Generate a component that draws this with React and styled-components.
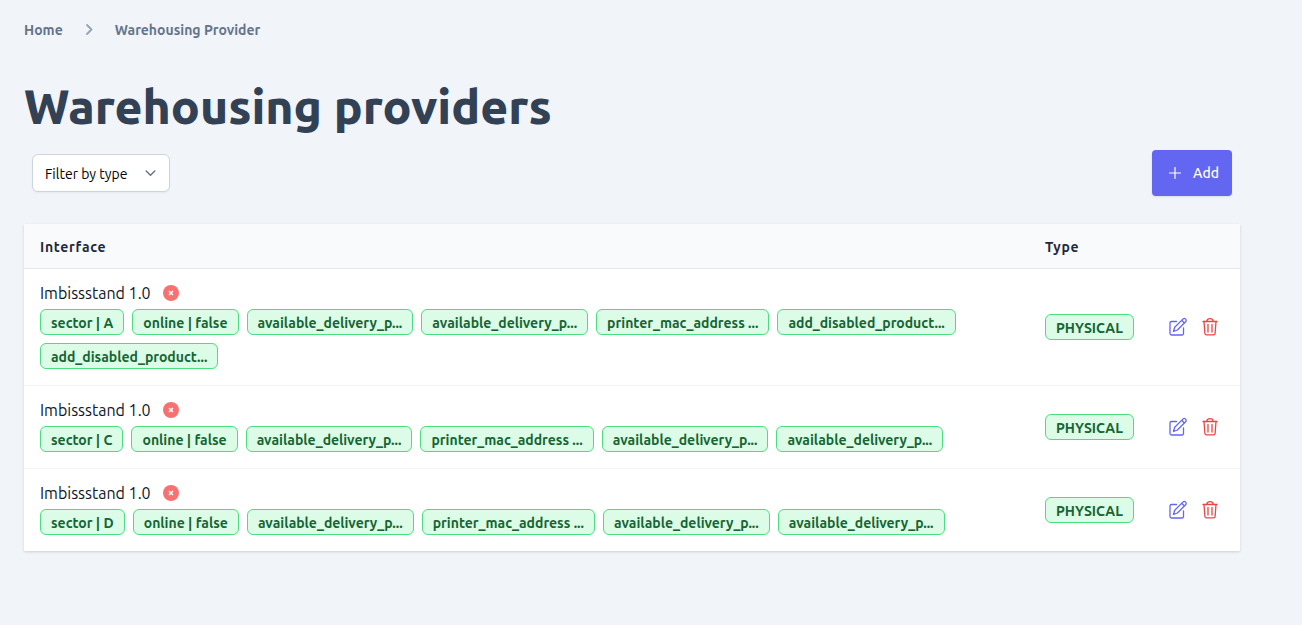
import React from "react";
import styled, { createGlobalStyle } from "styled-components";

const GlobalStyle = createGlobalStyle`
  *, *::before, *::after { box-sizing: border-box; }
  body {
    margin: 0;
    background: #f1f5f9;
    color: #0f172a;
    font-family: "Ubuntu", "Open Sans", "Noto Sans", sans-serif;
    font-size: 14px;
    line-height: 20px;
  }
  button, select { font: inherit; }
`;

const Page = styled.main`
  padding: 20px 62px 24px 24px;
`;

const Breadcrumb = styled.ol`
  display: flex;
  align-items: center;
  gap: 20px;
  margin: 0;
  padding: 0;
  list-style: none;
`;

const Crumb = styled.li`
  display: flex;
  align-items: center;
  gap: 20px;
`;

const CrumbLink = styled.a`
  color: #64748b;
  font-weight: 600;
  text-decoration: none;
`;

const Title = styled.h1`
  margin: 36px 0 14px;
  color: #334155;
  font-size: 48px;
  font-weight: 800;
  line-height: 60px;
`;

const Toolbar = styled.div`
  display: flex;
  align-items: center;
  justify-content: space-between;
  padding: 0 8px;
  margin-bottom: 28px;
`;

const FilterBox = styled.div`
  position: relative;
  display: inline-flex;
`;

const FilterSelect = styled.select`
  appearance: none;
  width: 138px;
  height: 38px;
  padding: 1px 32px 0 12px;
  border: 1px solid #cbd5e1;
  border-radius: 6px;
  background: #fff;
  color: #000;
  box-shadow: 0 1px 2px rgba(0, 0, 0, 0.05);
`;

const FilterArrow = styled.svg`
  position: absolute;
  top: 13px;
  right: 13px;
  pointer-events: none;
`;

const AddButton = styled.button`
  display: inline-flex;
  align-items: center;
  gap: 12px;
  height: 46px;
  padding: 0 13px 0 17px;
  border: 0;
  border-radius: 4px;
  background: #6366f1;
  color: #fff;
  font-weight: 500;
  line-height: 22px;
  box-shadow: 0 1px 2px rgba(0, 0, 0, 0.1);
`;

const Table = styled.table`
  width: 100%;
  table-layout: fixed;
  border-collapse: separate;
  border-spacing: 0;
  background: #fff;
  box-shadow: 0 1px 3px rgba(0, 0, 0, 0.1), 0 1px 2px rgba(0, 0, 0, 0.06);
`;

const HeadCell = styled.th`
  width: ${(p) => p.$width || "auto"};
  height: 45px;
  padding: 2px 16px 0;
  border-bottom: 1px solid #e2e8f0;
  background: #f8fafc;
  color: #1e293b;
  font-weight: 600;
  letter-spacing: 0.05em;
  text-align: left;
`;

const Row = styled.tr`
  &:not(:last-child) > td { border-bottom: 1px solid #f1f5f9; }
`;

const Cell = styled.td`
  padding: 12px 16px 16px;
  vertical-align: top;
`;

const MiddleCell = styled.td`
  padding: 0 ${(p) => p.$pad || "16px"};
  vertical-align: middle;
`;

const NameLine = styled.div`
  display: flex;
  align-items: center;
  gap: 12px;
  margin-bottom: 4px;
  font-size: 16px;
  line-height: 24px;
`;

const Tags = styled.div`
  display: flex;
  flex-wrap: wrap;
  gap: 8px;
`;

const Tag = styled.span`
  display: inline-block;
  height: 26px;
  padding: 0 10px;
  border: 1px solid #4ade80;
  border-radius: 6px;
  background: #dcfce7;
  color: #166534;
  font-weight: 600;
  line-height: 26px;
  white-space: nowrap;
`;

const Actions = styled.div`
  display: flex;
  gap: 12px;
`;

const IconButton = styled.button`
  display: flex;
  width: 20px;
  height: 20px;
  padding: 0;
  border: 0;
  background: none;
  color: ${(p) => p.$color};
`;

const Icon = styled.svg`
  display: block;
  fill: none;
  stroke: currentColor;
  stroke-linecap: round;
  stroke-linejoin: round;
`;

const rows = [
  {
    id: "a",
    tags: [
      "sector | A",
      "online | false",
      "available_delivery_p...",
      "available_delivery_p...",
      "printer_mac_address ...",
      "add_disabled_product...",
      "add_disabled_product...",
    ],
  },
  {
    id: "c",
    tags: [
      "sector | C",
      "online | false",
      "available_delivery_p...",
      "printer_mac_address ...",
      "available_delivery_p...",
      "available_delivery_p...",
    ],
  },
  {
    id: "d",
    tags: [
      "sector | D",
      "online | false",
      "available_delivery_p...",
      "printer_mac_address ...",
      "available_delivery_p...",
      "available_delivery_p...",
    ],
  },
];

const CrumbArrow = () => (
  <Icon width="12" height="12" viewBox="0 0 12 12" strokeWidth="1.8" aria-hidden="true">
    <path d="M4 1 8.5 5.5 4 10" stroke="#94a3b8" />
  </Icon>
);

const OfflineIcon = () => (
  <svg width="16" height="16" viewBox="0 0 16 16" role="img" aria-label="Offline">
    <circle cx="8" cy="8" r="8" fill="#f87171" />
    <path d="m6 6 4 4m0-4-4 4" stroke="#fff" strokeWidth="1.5" />
  </svg>
);

const EditIcon = () => (
  <Icon width="20" height="20" viewBox="0 0 20 20" strokeWidth="1.3" aria-hidden="true">
    <path d="M8.5 4.500H3.500a1.500 1.500 0 0 0-1.500 1.500V16.500a1.500 1.500 0 0 0 1.500 1.500H14a1.500 1.500 0 0 0 1.500-1.500V11" />
    <path d="m5.500 14.500 1.200-4.200 8.200-8.200a1.800 1.800 0 0 1 2.700 2.700L9.400 13zM13.700 3.300l2.700 2.700" />
  </Icon>
);

const TrashIcon = () => (
  <Icon width="20" height="20" viewBox="0 0 20 20" strokeWidth="1.3" aria-hidden="true">
    <path d="M3 4.500h14M6.800 4.500C6.800 2.600 8 1.600 10 1.600s3.200 1 3.200 2.900" />
    <path d="m4 4.500.9 11.900c.1.900.7 1.500 1.600 1.500h7c.9 0 1.500-.6 1.600-1.500L16 4.500M8 7.500v7.500M12 7.500v7.500" />
  </Icon>
);

export default function App() {
  return (
    <>
      <GlobalStyle />
      <Page>
        <nav aria-label="Breadcrumb">
          <Breadcrumb>
            <Crumb>
              <CrumbLink href="#home">Home</CrumbLink>
            </Crumb>
            <Crumb>
              <CrumbArrow />
              <CrumbLink href="#providers">Warehousing Provider</CrumbLink>
            </Crumb>
          </Breadcrumb>
        </nav>
        <Title>Warehousing providers</Title>
        <Toolbar>
          <FilterBox>
            <FilterSelect aria-label="Filter by type" defaultValue="">
              <option value="">Filter by type</option>
              <option value="physical">Physical</option>
            </FilterSelect>
            <FilterArrow width="12" height="12" viewBox="0 0 12 12" fill="none" aria-hidden="true">
              <path d="m1.200 4 4.300 4.200L9.800 4" stroke="#6b7280" strokeWidth="1.500" strokeLinecap="round" strokeLinejoin="round" />
            </FilterArrow>
          </FilterBox>
          <AddButton type="button">
            <Icon width="12" height="12" viewBox="0 0 12 12" strokeWidth="1.200" aria-hidden="true">
              <path d="M6 .5v11M.5 6h11" />
            </Icon>
            Add
          </AddButton>
        </Toolbar>
        <Table>
          <thead>
            <tr>
              <HeadCell scope="col">Interface</HeadCell>
              <HeadCell scope="col" $width="119px">Type</HeadCell>
              <HeadCell as="td" $width="92px" />
            </tr>
          </thead>
          <tbody>
            {rows.map((row) => (
              <Row key={row.id}>
                <Cell>
                  <NameLine>
                    Imbissstand 1.0
                    <OfflineIcon />
                  </NameLine>
                  <Tags>
                    {row.tags.map((tag, i) => (
                      <Tag key={i}>{tag}</Tag>
                    ))}
                  </Tags>
                </Cell>
                <MiddleCell>
                  <Tag>PHYSICAL</Tag>
                </MiddleCell>
                <MiddleCell $pad="20px">
                  <Actions>
                    <IconButton type="button" $color="#6366f1" aria-label="Edit">
                      <EditIcon />
                    </IconButton>
                    <IconButton type="button" $color="#ef4444" aria-label="Delete">
                      <TrashIcon />
                    </IconButton>
                  </Actions>
                </MiddleCell>
              </Row>
            ))}
          </tbody>
        </Table>
      </Page>
    </>
  );
}
